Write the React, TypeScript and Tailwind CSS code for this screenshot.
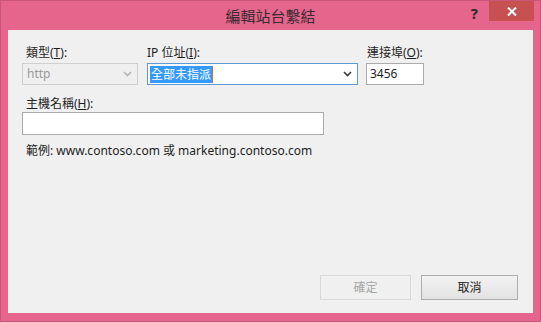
import React from "react";

const font = {
  fontFamily: '"Segoe UI", "Noto Sans", "Noto Sans CJK TC", sans-serif',
};

const Chevron = ({ color }: { color: string }) => (
  <svg width="9" height="6" viewBox="0 0 9 6" className="shrink-0">
    <path d="M1 1 L4.5 4.5 L8 1" fill="none" stroke={color} strokeWidth="1.6" />
  </svg>
);

const App = () => {
  return (
    <div
      className="w-[541px] h-[322px] bg-[#e5658c] border border-[#c9557a] flex flex-col text-[12px] text-[#1e1e1e]"
      style={font}
    >
      {/* title bar */}
      <div className="h-[29px] flex items-start relative">
        <div className="flex-1 text-center pt-[4px] text-[15px] text-[#3a2a30]">編輯站台繫結</div>
        <div className="absolute right-[62px] top-[1px] text-[15px] font-bold text-[#2a2a2a]">?</div>
        <div className="absolute right-[6px] top-0 w-[45px] h-[20px] bg-[#c75050] flex items-center justify-center">
          <svg width="10" height="9" viewBox="0 0 10 9">
            <path d="M1 0.5 L9 8.5 M9 0.5 L1 8.5" stroke="#fff" strokeWidth="2" />
          </svg>
        </div>
      </div>

      {/* client area */}
      <div className="mx-[7px] h-[283px] bg-[#f0f0f0] flex flex-col">
        <div className="flex pl-[14px] pt-[14px]">
          <div className="w-[116px] flex flex-col">
            <div className="pl-[4px] h-[19px]">
              類型(<span className="underline">T</span>):
            </div>
            <div className="h-[22px] border border-[#d0d0d0] bg-[#efefef] flex items-center justify-between pl-[4px] pr-[5px] text-[#9a9a9a]">
              <span>http</span>
              <Chevron color="#b5b5b5" />
            </div>
          </div>
          <div className="w-[211px] ml-[9px] flex flex-col">
            <div className="pl-[0px] h-[19px]">
              IP 位址(<span className="underline">I</span>):
            </div>
            <div className="h-[22px] border border-[#5b9ad9] bg-white flex items-center justify-between pl-[2px] pr-[5px]">
              <span className="flex items-center">
                <span className="bg-[#3399ff] text-white px-[1px] leading-[17px]">全部未指派</span>
                <span className="w-[1px] h-[17px] bg-[#d07020]"></span>
              </span>
              <Chevron color="#3c3c3c" />
            </div>
          </div>
          <div className="w-[58px] ml-[8px] flex flex-col">
            <div className="pl-[1px] h-[19px]">
              連接埠(<span className="underline">O</span>):
            </div>
            <div className="h-[22px] border border-[#ababab] bg-white flex items-center pl-[3px]">3456</div>
          </div>
        </div>

        <div className="pl-[18px] pt-[10px] h-[27px]">
          主機名稱(<span className="underline">H</span>):
        </div>
        <div className="ml-[14px] w-[302px] h-[23px] border border-[#ababab] bg-white"></div>
        <div className="pl-[18px] pt-[7px]">範例: www.contoso.com 或 marketing.contoso.com</div>

        <div className="flex-1"></div>
        <div className="flex justify-end gap-[10px] pr-[15px] pb-[13px]">
          <div className="w-[91px] h-[25px] border border-[#d9d9d9] bg-[#f0f0f0] flex items-center justify-center text-[#a6a6a6]">
            確定
          </div>
          <div className="w-[97px] h-[25px] border border-[#acacac] bg-gradient-to-b from-[#f2f2f2] to-[#e3e3e3] flex items-center justify-center">
            取消
          </div>
        </div>
      </div>
    </div>
  );
};

export default App;
